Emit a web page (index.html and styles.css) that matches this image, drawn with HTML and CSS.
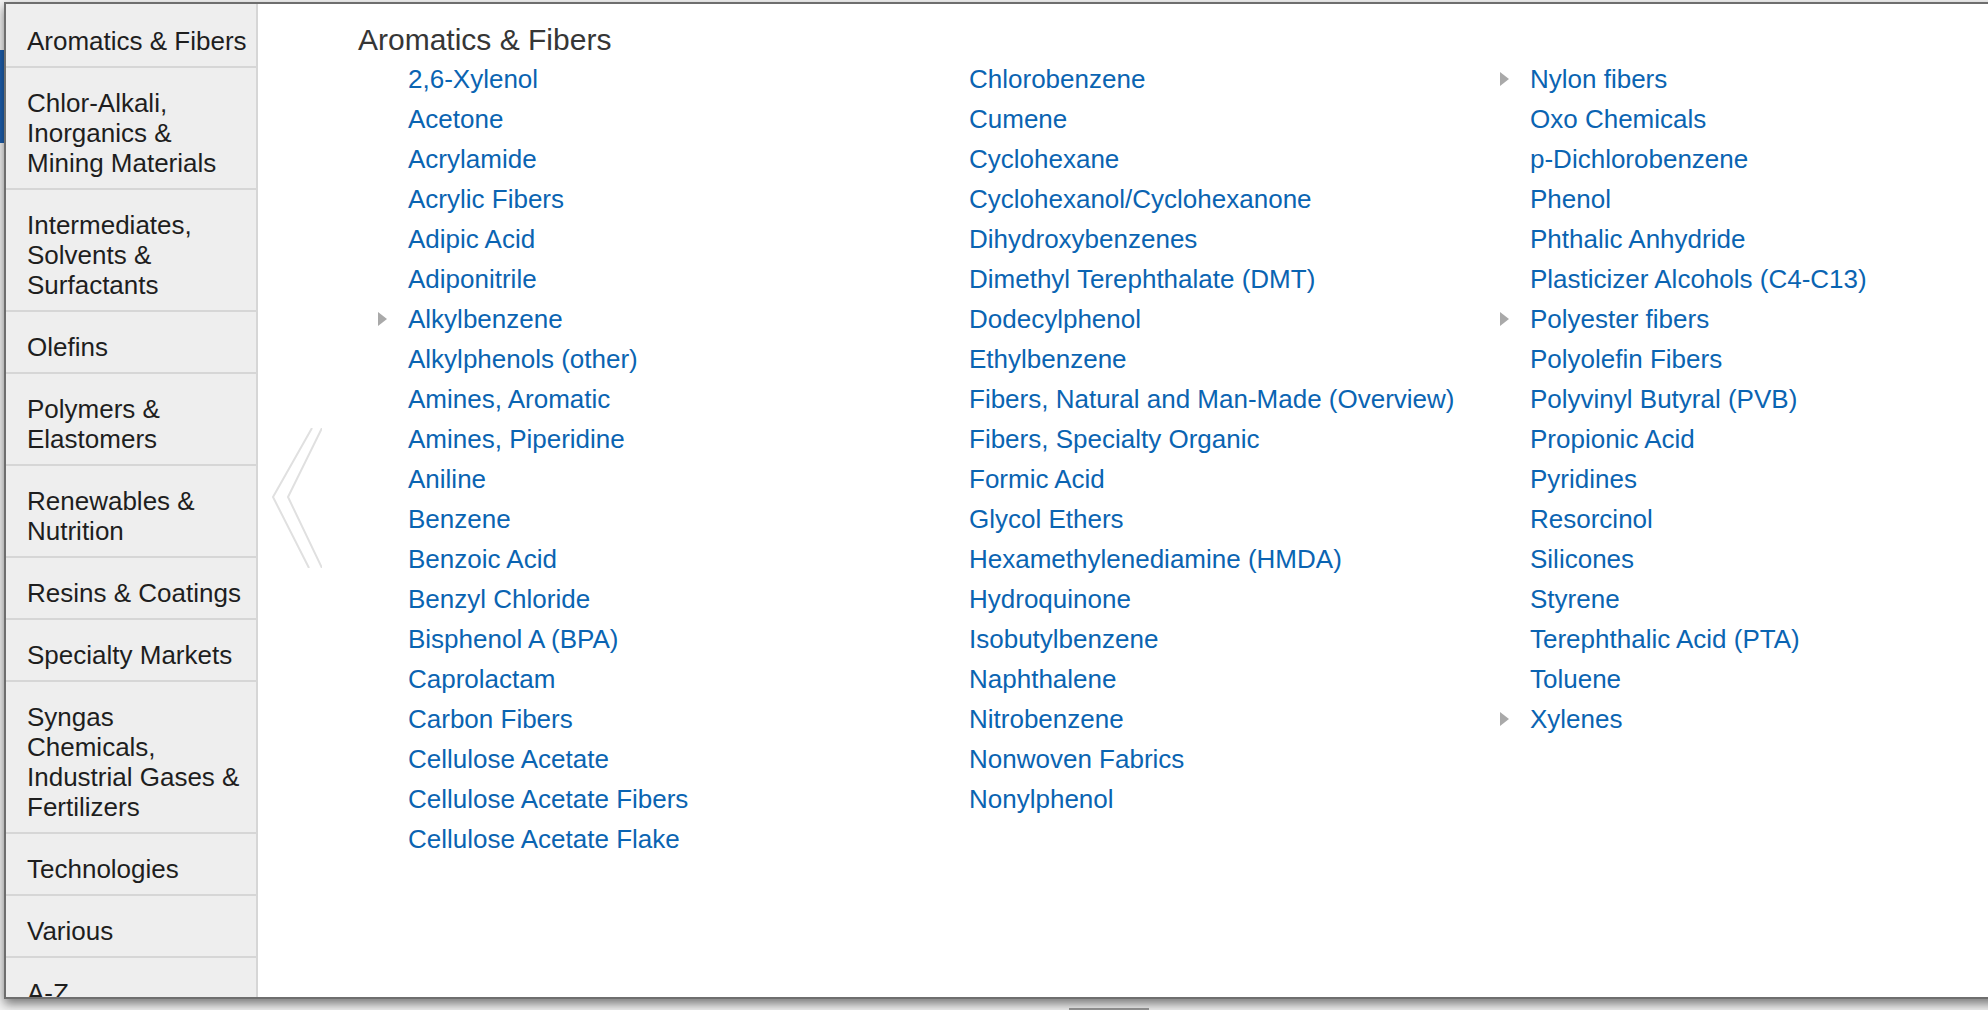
FILE: index.html
```html
<!DOCTYPE html>
<html lang="en">
<head>
<meta charset="utf-8">
<title>Aromatics &amp; Fibers</title>
<link rel="stylesheet" href="styles.css">
</head>
<body>
<div class="popup">
  <nav class="sidebar">
    <a class="cat" href="#">Aromatics &amp; Fibers</a>
    <a class="cat" href="#">Chlor-Alkali,<br>Inorganics &amp;<br>Mining Materials</a>
    <a class="cat" href="#">Intermediates,<br>Solvents &amp;<br>Surfactants</a>
    <a class="cat" href="#">Olefins</a>
    <a class="cat" href="#">Polymers &amp;<br>Elastomers</a>
    <a class="cat" href="#">Renewables &amp;<br>Nutrition</a>
    <a class="cat" href="#">Resins &amp; Coatings</a>
    <a class="cat" href="#">Specialty Markets</a>
    <a class="cat" href="#">Syngas<br>Chemicals,<br>Industrial Gases &amp;<br>Fertilizers</a>
    <a class="cat" href="#">Technologies</a>
    <a class="cat" href="#">Various</a>
    <a class="cat" href="#">A-Z</a>
  </nav>
  <section class="main">
    <svg class="chevron" width="50" height="140" viewBox="0 0 50 140" aria-hidden="true">
      <polyline points="40,0 1,69 37,140" fill="none" stroke="#e0e0e0" stroke-width="2"/>
      <polyline points="50,0 16,69 50,140" fill="none" stroke="#e0e0e0" stroke-width="2"/>
    </svg>
    <h2 class="title">Aromatics &amp; Fibers</h2>
    <div class="cols">
      <ul class="list">
        <li><a href="#">2,6-Xylenol</a></li>
        <li><a href="#">Acetone</a></li>
        <li><a href="#">Acrylamide</a></li>
        <li><a href="#">Acrylic Fibers</a></li>
        <li><a href="#">Adipic Acid</a></li>
        <li><a href="#">Adiponitrile</a></li>
        <li class="sub"><a href="#">Alkylbenzene</a></li>
        <li><a href="#">Alkylphenols (other)</a></li>
        <li><a href="#">Amines, Aromatic</a></li>
        <li><a href="#">Amines, Piperidine</a></li>
        <li><a href="#">Aniline</a></li>
        <li><a href="#">Benzene</a></li>
        <li><a href="#">Benzoic Acid</a></li>
        <li><a href="#">Benzyl Chloride</a></li>
        <li><a href="#">Bisphenol A (BPA)</a></li>
        <li><a href="#">Caprolactam</a></li>
        <li><a href="#">Carbon Fibers</a></li>
        <li><a href="#">Cellulose Acetate</a></li>
        <li><a href="#">Cellulose Acetate Fibers</a></li>
        <li><a href="#">Cellulose Acetate Flake</a></li>
      </ul>
      <ul class="list">
        <li><a href="#">Chlorobenzene</a></li>
        <li><a href="#">Cumene</a></li>
        <li><a href="#">Cyclohexane</a></li>
        <li><a href="#">Cyclohexanol/Cyclohexanone</a></li>
        <li><a href="#">Dihydroxybenzenes</a></li>
        <li><a href="#">Dimethyl Terephthalate (DMT)</a></li>
        <li><a href="#">Dodecylphenol</a></li>
        <li><a href="#">Ethylbenzene</a></li>
        <li><a href="#">Fibers, Natural and Man-Made (Overview)</a></li>
        <li><a href="#">Fibers, Specialty Organic</a></li>
        <li><a href="#">Formic Acid</a></li>
        <li><a href="#">Glycol Ethers</a></li>
        <li><a href="#">Hexamethylenediamine (HMDA)</a></li>
        <li><a href="#">Hydroquinone</a></li>
        <li><a href="#">Isobutylbenzene</a></li>
        <li><a href="#">Naphthalene</a></li>
        <li><a href="#">Nitrobenzene</a></li>
        <li><a href="#">Nonwoven Fabrics</a></li>
        <li><a href="#">Nonylphenol</a></li>
      </ul>
      <ul class="list">
        <li class="sub"><a href="#">Nylon fibers</a></li>
        <li><a href="#">Oxo Chemicals</a></li>
        <li><a href="#">p-Dichlorobenzene</a></li>
        <li><a href="#">Phenol</a></li>
        <li><a href="#">Phthalic Anhydride</a></li>
        <li><a href="#">Plasticizer Alcohols (C4-C13)</a></li>
        <li class="sub"><a href="#">Polyester fibers</a></li>
        <li><a href="#">Polyolefin Fibers</a></li>
        <li><a href="#">Polyvinyl Butyral (PVB)</a></li>
        <li><a href="#">Propionic Acid</a></li>
        <li><a href="#">Pyridines</a></li>
        <li><a href="#">Resorcinol</a></li>
        <li><a href="#">Silicones</a></li>
        <li><a href="#">Styrene</a></li>
        <li><a href="#">Terephthalic Acid (PTA)</a></li>
        <li><a href="#">Toluene</a></li>
        <li class="sub"><a href="#">Xylenes</a></li>
      </ul>
    </div>
  </section>
</div>
</body>
</html>
```

FILE: styles.css
```css
html, body {
  margin: 0;
  padding: 0;
  height: 1010px;
  overflow: hidden;
}

body {
  font-family: "Liberation Sans", Arial, Helvetica, sans-serif;
  background:
    linear-gradient(#1d5fae, #1d5fae) 0 50px / 4px 93px no-repeat,
    linear-gradient(#9a9a9a, #9a9a9a) 1069px 1008px / 80px 2px no-repeat,
    #f3f3f3;
}

.popup {
  display: flex;
  width: 2040px;
  height: 993px;
  margin: 2px 0 0 4px;
  border: 2px solid #6e6e6e;
  background: #fff;
  box-shadow: 0 5px 10px rgba(0, 0, 0, 0.5);
}

.sidebar {
  flex: none;
  width: 250px;
  padding-top: 2px;
  background: #eeeeee;
  border-right: 2px solid #d6d6d6;
  display: flex;
  flex-direction: column;
  overflow: hidden;
}

.cat {
  flex: none;
  display: block;
  padding: 20px 8px 10px 21px;
  font-size: 26px;
  line-height: 30px;
  color: #1e1e1e;
  text-decoration: none;
  white-space: nowrap;
  border-bottom: 2px solid #d6d6d6;
}

.main {
  position: relative;
  flex: 1;
  padding-top: 18px;
}

.chevron {
  position: absolute;
  left: 14px;
  top: 424px;
}

.title {
  margin: 0 0 1px 100px;
  font-size: 30px;
  line-height: 36px;
  font-weight: normal;
  color: #363636;
}

.cols {
  display: grid;
  grid-template-columns: 561px 561px 561px;
  margin-left: 120px;
  align-items: start;
}

.list {
  list-style: none;
  margin: 0;
  padding: 0;
}

.list li {
  position: relative;
  padding-left: 30px;
  font-size: 26px;
  line-height: 40px;
  white-space: nowrap;
}

.list a {
  color: #0a64b2;
  text-decoration: none;
}

.list li.sub::before {
  content: "";
  position: absolute;
  left: 0;
  top: 13px;
  width: 0;
  height: 0;
  border-left: 9px solid #a9a9a9;
  border-top: 7.5px solid transparent;
  border-bottom: 7.5px solid transparent;
}
```
